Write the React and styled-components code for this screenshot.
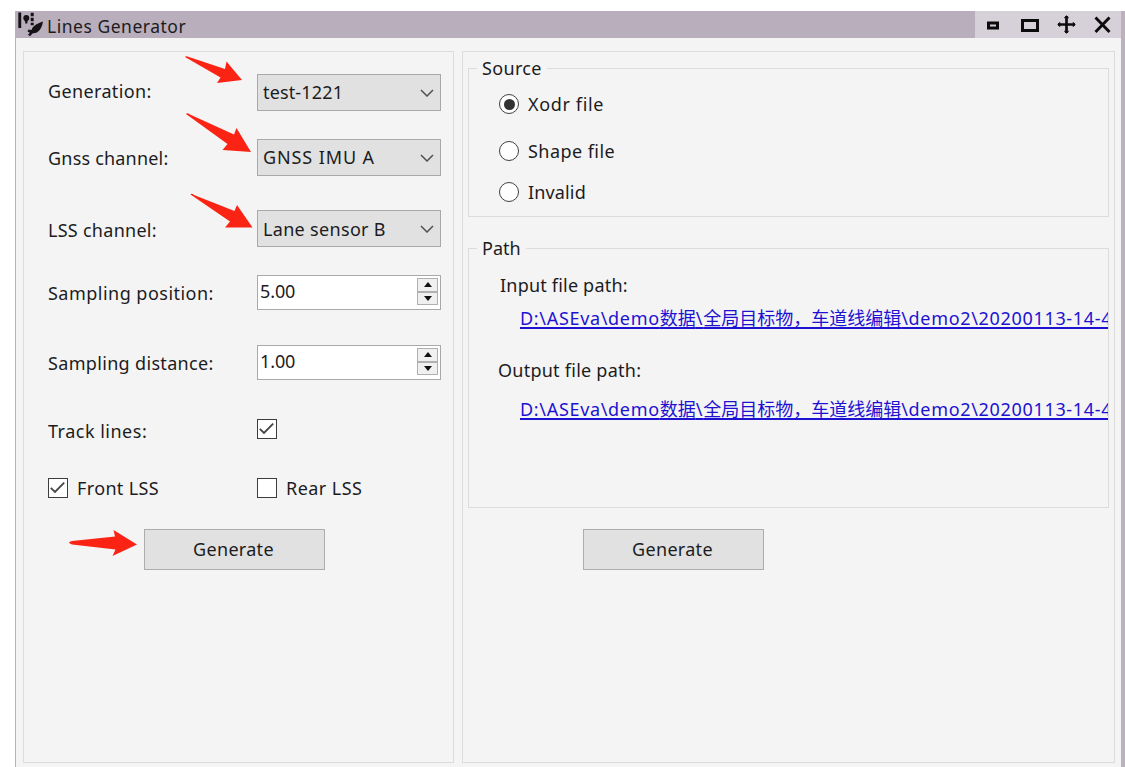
import React from "react";
import styled, { createGlobalStyle } from "styled-components";

const Global = createGlobalStyle`
  * { box-sizing: border-box; }
  body { margin: 0; background: #fff; overflow: hidden; }
`;

const Window = styled.main`
  width: 1110px;
  height: 756px;
  margin: 11px 0 0 15px;
  display: flex;
  flex-direction: column;
  background: #f4f4f4;
  border-left: 1px solid #b5b5b7;
  border-right: 4px solid #bcb2bf;
  font: 18px/24px "Noto Sans", "Noto Sans CJK SC", sans-serif;
  color: #1c1c1e;
`;

const TitleBar = styled.header`
  flex: none;
  height: 27px;
  display: flex;
  align-items: center;
  background: #b9aebc;
  padding-left: 1px;
`;

const Title = styled.h1`
  flex: 1;
  margin: 0 0 0 3px;
  padding-top: 2px;
  font-size: 17.5px;
  font-weight: 400;
  letter-spacing: 0.52px;
`;

const WindowActions = styled.div`
  width: 146px;
  height: 27px;
  background: #d6d1d8;
  svg { display: block; }
`;

const Body = styled.div`
  flex: 1;
  display: grid;
  grid-template-columns: 431px 653px;
  column-gap: 8px;
  padding: 13px 0 4px 7px;
`;

const Panel = styled.section`
  border: 1px solid #dcdcdd;
  display: flex;
  flex-direction: column;
  min-width: 0;
`;

const FormRow = styled.div`
  flex: none;
  display: grid;
  grid-template-columns: 209px 184px;
  align-items: center;
  height: ${(p) => p.$height}px;
  margin: ${(p) => p.$gap}px 0 0 24px;
`;

const Text = styled.span`
  white-space: nowrap;
  letter-spacing: ${(p) => p.$spacing || 0}px;
  padding-bottom: ${(p) => p.$lift || 0}px;
  padding-top: ${(p) => p.$drop || 0}px;
`;

const Combo = styled.div`
  height: 37px;
  display: flex;
  align-items: center;
  justify-content: space-between;
  padding: 0 6px 0 5px;
  background: #e1e1e1;
  border: 1px solid #a9a9ab;
`;

const Spin = styled.div`
  height: 35px;
  display: flex;
  justify-content: space-between;
  padding: 2px 2px 3px 2px;
  background: #fff;
  border: 1px solid #a9a9ab;
`;

const Steppers = styled.div`
  width: 21px;
  height: 27px;
  display: grid;
  grid-template-rows: 1fr 1fr;
`;

const Stepper = styled.button`
  padding: 0;
  display: flex;
  align-items: center;
  justify-content: center;
  background: #f0f0f0;
  border: 1px solid #b0b0b0;
`;

const Choice = styled.label`
  display: flex;
  align-items: center;
  gap: 9px;
  height: 24px;
  margin-top: ${(p) => p.$top || 0}px;
`;

const Box = styled.span`
  width: 20px;
  height: 20px;
  display: block;
  background: #fff;
  border: 1.5px solid #3c3c3c;
  svg { display: block; }
`;

const Radio = styled.span`
  width: 20px;
  height: 20px;
  border-radius: 50%;
  display: flex;
  align-items: center;
  justify-content: center;
  background: #fff;
  border: 1.5px solid #404040;
  &::after {
    content: "";
    width: 11px;
    height: 11px;
    border-radius: 50%;
    background: ${(p) => (p.$on ? "#333" : "transparent")};
  }
`;

const Button = styled.button`
  flex: none;
  width: 181px;
  height: 41px;
  margin: ${(p) => p.$top}px 0 0 120px;
  padding: 0 2px 1px 0;
  font: inherit;
  letter-spacing: 0.3px;
  color: inherit;
  background: #e1e1e1;
  border: 1px solid #adadad;
`;

const Group = styled.fieldset`
  flex: none;
  min-width: 0;
  width: 641px;
  height: ${(p) => p.$height}px;
  margin: ${(p) => p.$top}px 0 0 5px;
  padding: ${(p) => p.$pad}px 0 0 30px;
  border: 1px solid #dcdcdd;
`;

const Legend = styled.legend`
  height: 24px;
  margin-left: -22px;
  padding: 0 5px;
`;

const PathLabel = styled.div`
  margin: ${(p) => p.$top}px 0 0 ${(p) => p.$left}px;
  height: 24px;
`;

const PathLink = styled.div`
  margin: ${(p) => p.$top}px 0 0 21px;
  height: 27px;
  overflow: hidden;
  white-space: nowrap;
  color: #1d12d2;
`;

const Underlined = styled.span`
  text-decoration: underline;
  text-decoration-thickness: 1.5px;
  text-underline-offset: 2px;
  text-decoration-skip-ink: none;
`;

const Pointers = styled.svg`
  position: absolute;
  left: 0;
  top: 0;
  pointer-events: none;
`;

const Chevron = () => (
  <svg width="14" height="9" viewBox="0 0 14 9" fill="none" stroke="#505052" strokeWidth="1.5">
    <path d="M1 2 7 8 13 2" />
  </svg>
);

const CheckBox = ({ checked }) => (
  <Box>
    {checked && (
      <svg width="17" height="17" viewBox="0 0 17 17" fill="none" stroke="#444" strokeWidth="1.8">
        <path d="M1.8 8.8 6 13 15.2 3.6" />
      </svg>
    )}
  </Box>
);

const AppIcon = () => (
  <svg width="27" height="27" viewBox="0 0 27 27" fill="#151316">
    <path d="M1.300 1.500h2.900v15.500H1.300z" />
    <path d="M6.300 7a3 3 0 0 1 6 0c0 1.800-1 2.500-1.900 3.500v2H8.200v-2C7.300 9.500 6.300 8.800 6.300 7z" />
    <path d="M13.700 1.800h3v3.400h-3zM13.700 6.800h3v3.400h-3zM13.700 11.800h3v2.400h-3z" />
    <path d="M26 10.500c-.6 4.500-2.500 8.500-5.500 10.500-1.700 1.100-3.500 1.300-5 1.500L13 25.300l-2-1.600 1.800-2-2.300-1.300 1-2 3 .7c.7-2.800 2.500-4.300 5-5.800 2.200-1.300 4.500-2 6.500-2.800z" />
  </svg>
);

const SpinBox = ({ value }) => (
  <Spin>
    <Text $spacing={-0.1} $drop={1}>{value}</Text>
    <Steppers>
      <Stepper aria-label="Increase">
        <svg width="8" height="5" viewBox="0 0 8 5"><path d="M0 5 4 0 8 5z" fill="#111" /></svg>
      </Stepper>
      <Stepper aria-label="Decrease">
        <svg width="8" height="5" viewBox="0 0 8 5"><path d="M0 0 4 5 8 0z" fill="#111" /></svg>
      </Stepper>
    </Steppers>
  </Spin>
);

const FilePath = ({ top, parts }) => (
  <PathLink $top={top}>
    <Underlined>
      {parts.map((part) => (
        <Text key={part} $spacing={/^[\x20-\x7e]+$/.test(part) ? 0.68 : 0}>{part}</Text>
      ))}
    </Underlined>
  </PathLink>
);

const combos = [
  { label: "Generation:", value: "test-1221", gap: 22, labelSpacing: 0.36, valueSpacing: 0.15, lift: 4, valueLift: 2 },
  { label: "Gnss channel:", value: "GNSS IMU A", gap: 28, labelSpacing: 0.2, valueSpacing: 0.9, lift: 0, valueLift: 1 },
  { label: "LSS channel:", value: "Lane sensor B", gap: 34, labelSpacing: 0.27, valueSpacing: 0.32, drop: 2, valueLift: 0 },
];

const PATH_PARTS = ["D:\\ASEva\\demo", "数据", "\\", "全局目标物，车道线编辑", "\\demo2\\20200113-14-4"];

export default function App() {
  return (
    <>
      <Global />
      <Window>
        <TitleBar>
          <AppIcon />
          <Title>Lines Generator</Title>
          <WindowActions>
            <svg width="146" height="27" viewBox="0 0 146 27" fill="none" stroke="#0c0c0c">
              <rect x="13.500" y="12" width="9" height="5" strokeWidth="3" />
              <rect x="47.500" y="9.500" width="15" height="10" strokeWidth="3" />
              <path d="M91.500 5v17M83 13.500h17" strokeWidth="2.700" />
              <path d="M89.500 7.200l2-2 2 2M89.500 19.800l2 2 2-2M85.200 11.500l-2 2 2 2M97.800 11.500l2 2-2 2" strokeWidth="1.200" />
              <path d="M120.500 6.500l14 14.500M134.500 6.500l-14 14.500" strokeWidth="2.900" />
            </svg>
          </WindowActions>
        </TitleBar>
        <Body>
          <Panel>
            {combos.map((c) => (
              <FormRow key={c.label} $height={37} $gap={c.gap}>
                <Text $spacing={c.labelSpacing} $lift={c.lift} $drop={c.drop}>{c.label}</Text>
                <Combo>
                  <Text $spacing={c.valueSpacing} $lift={c.valueLift}>{c.value}</Text>
                  <Chevron />
                </Combo>
              </FormRow>
            ))}
            <FormRow $height={35} $gap={28}>
              <Text $spacing={0.48}>Sampling position:</Text>
              <SpinBox value="5.00" />
            </FormRow>
            <FormRow $height={35} $gap={35}>
              <Text $spacing={0.33}>Sampling distance:</Text>
              <SpinBox value="1.00" />
            </FormRow>
            <FormRow $height={30} $gap={34}>
              <Text $spacing={0.5} $drop={3}>Track lines:</Text>
              <CheckBox checked />
            </FormRow>
            <FormRow $height={24} $gap={32}>
              <Choice><CheckBox checked /><Text $spacing={0.36}>Front LSS</Text></Choice>
              <Choice><CheckBox /><Text $spacing={0.45}>Rear LSS</Text></Choice>
            </FormRow>
            <Button $top={29}>Generate</Button>
          </Panel>
          <Panel>
            <Group $height={161} $top={4} $pad={12}>
              <Legend><Text $spacing={0.35}>Source</Text></Legend>
              <Choice><Radio $on /><Text $spacing={0.65}>Xodr file</Text></Choice>
              <Choice $top={23}><Radio /><Text $spacing={0.45}>Shape file</Text></Choice>
              <Choice $top={17}><Radio /><Text $spacing={0.15}>Invalid</Text></Choice>
            </Group>
            <Group $height={272} $top={19} $pad={13}>
              <Legend><Text>Path</Text></Legend>
              <PathLabel $top={0} $left={1}><Text $spacing={0.2}>Input file path:</Text></PathLabel>
              <FilePath top={9} parts={PATH_PARTS} />
              <PathLabel $top={25} $left={-1}><Text $spacing={0.25}>Output file path:</Text></PathLabel>
              <FilePath top={15} parts={PATH_PARTS} />
            </Group>
            <Button $top={21}>Generate</Button>
          </Panel>
        </Body>
      </Window>
      <Pointers width="460" height="600" viewBox="0 0 460 600" fill="#fb2414">
        <path d="M185 57Q186 55.500 189 57L225 69 226.500 61.500 242 80 217 83 220.500 77.500z" />
        <path d="M186 114Q187 112.500 190 114.500L234 134.500 236.500 128 251 152 222.500 150 227.500 144z" />
        <path d="M190.500 194.500Q191.500 193 194 195L234.500 211 237 205 252.500 227.500 225 227.500 230 221.500z" />
        <path d="M69 543Q69 541.500 72 541L115 536.500 113.500 530 137 544.500 112.500 556 115.500 549.500 72 544.500z" />
      </Pointers>
    </>
  );
}
